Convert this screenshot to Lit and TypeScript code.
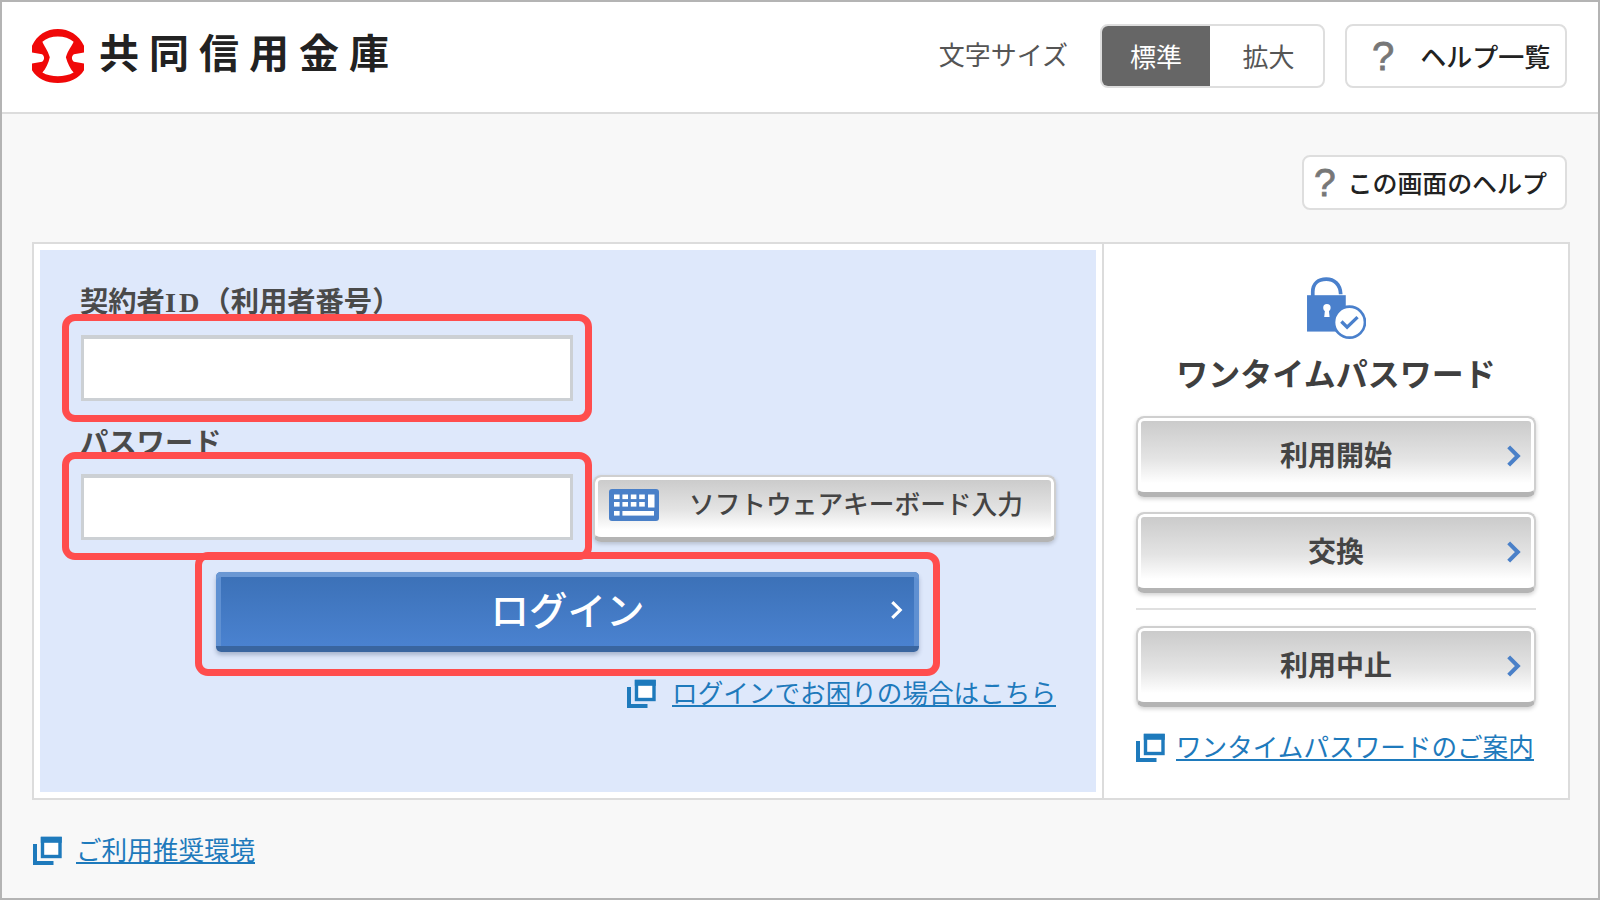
import { LitElement, html, css, svg } from "lit";
import { customElement } from "lit/decorators.js";

const linkIcon = html`<svg class="li" viewBox="0 0 29 29" width="29" height="29">
  <path d="M2 8v19h18.5" fill="none" stroke="#1e7abc" stroke-width="4"/>
  <rect x="9.5" y="2.5" width="17.5" height="18" fill="#fff" stroke="#1e7abc" stroke-width="3.4"/>
  <rect x="7.8" y="0.8" width="21" height="6" fill="#1e7abc"/>
</svg>`;

const chev = (c: string, w: number, h: number, sw: number) => html`<svg class="chev" viewBox="0 0 14 22" width=${w} height=${h}>
  <path d="M2.5 2.5 L11 11 L2.5 19.5" fill="none" stroke=${c} stroke-width=${sw}/>
</svg>`;

const keyCells = () => {
  const out = [];
  for (let r = 0; r < 2; r++) {
    for (let c = 0; c < 4; c++) {
      out.push(svg`<rect x=${5 + c * 8.4} y=${5.5 + r * 7.5} width="5.6" height="4.6" fill="#fff"/>`);
    }
  }
  return out;
};

@customElement("app-root")
export class AppRoot extends LitElement {
  static styles = css`
    :host { display: block; }
    * { box-sizing: border-box; }
    .page {
      width: 1600px; height: 900px; border: 2px solid #b4b4b4; background: #f8f8f8;
      display: flex; flex-direction: column; overflow: hidden;
      font-family: "Noto Sans CJK JP", "Noto Sans", sans-serif; color: #444;
    }
    header {
      height: 112px; flex: none; background: #fff; border-bottom: 2px solid #dcdcdc;
      display: flex; align-items: flex-start; padding: 22px 31px 0 30px;
    }
    .logo { display: flex; align-items: center; gap: 14px; height: 63px; }
    .logo svg { display: block; }
    .logo-text {
      font-size: 40px; font-weight: 700; letter-spacing: 10px; line-height: 50px; color: #222;
      white-space: nowrap; margin: -10px 0 0 1px;
    }
    .spacer { flex: 1; }
    .size-label { font-size: 26px; line-height: 60px; color: #555; margin-right: 32px; }
    .seg {
      display: flex; width: 225px; height: 64px; border: 2px solid #dedede; border-radius: 8px;
      overflow: hidden; background: #fff; margin-right: 20px;
    }
    .seg div { display: flex; align-items: center; justify-content: center; font-size: 26px; line-height: 1; color: #555; }
    .seg .on { width: 108px; background: #666; color: #fff; }
    .seg .off { flex: 1; padding-left: 4px; }
    .help-list {
      width: 222px; height: 64px; border: 2px solid #dedede; border-radius: 8px; background: #fff;
      display: flex; align-items: center; padding-left: 25px; color: #222;
      font-size: 26px; font-weight: 500; line-height: 1;
    }
    .q { font-family: "Liberation Sans", sans-serif; color: #777; font-weight: 400; -webkit-text-stroke: 0.8px #777; }
    .help-list .q { font-size: 40px; margin-right: 26px; }
    main { flex: 1; padding: 41px 28px 0 30px; display: flex; flex-direction: column; }
    .help-row { display: flex; justify-content: flex-end; margin-right: 3px; }
    .help-btn {
      width: 265px; height: 55px; border: 2px solid #dedede; border-radius: 8px; background: #fff;
      display: flex; align-items: center; padding-left: 10px; color: #222;
      font-size: 25px; font-weight: 500; line-height: 1; white-space: nowrap; letter-spacing: -0.1px;
    }
    .help-btn .q { font-size: 39px; margin-right: 12px; }
    .card {
      margin-top: 32px; height: 558px; border: 2px solid #dcdcdc; background: #fff;
      display: flex;
    }
    .blue {
      width: 1056px; flex: none; background: #dee8fb; padding: 30px 40px 0 40px; margin: 6px 0 6px 6px;
    }
    label { display: block; font-size: 28.3px; line-height: 40px; font-weight: 700; color: #4a4a4a; white-space: nowrap; }
    label .latin { font-family: "Liberation Serif", serif; letter-spacing: 3px; }
    .hl { position: relative; }
    .hl::after {
      content: ""; position: absolute; border: 7px solid #ff4d4d; border-radius: 13px; pointer-events: none;
    }
    .field.hl { width: 492px; flex: none; margin-left: 1px; }
    .field.first::after { inset: -21px -19px -21px -19px; }
    .field.second::after { inset: -22px -19px -20px -19px; }
    .input {
      display: block; width: 100%; height: 66px; background: #fff; border: 3px solid #ccd0d4;
      border-top-width: 4px; border-radius: 0; padding: 0; outline: none;
    }
    .first { margin-top: 12px; }
    .pw-label { margin-top: 20px; }
    .pw-row { display: flex; gap: 20px; margin-top: 13px; align-items: flex-start; }
    .grey-btn {
      border: 2px solid #cfcfcf; border-bottom: 5px solid #b4b4b4; border-radius: 8px;
      background: linear-gradient(#c9c9c9, #e4e4e4 55%, #ffffff 88%);
      box-shadow: inset 0 0 0 3px #fff, 0 2px 4px rgba(0, 0, 0, 0.18);
      font-weight: 700; color: #444;
    }
    .key-btn {
      width: 463px; height: 67px; margin-top: 1px; display: flex; align-items: center; padding: 0 0 8px 14px;
      font-size: 25.7px; font-weight: 500; line-height: 1; white-space: nowrap;
    }
    .key-btn svg { margin: 4px 30px 0 0; flex: none; }
    .login-wrap { width: 703px; margin: 30px 0 0 136px; }
    .login-wrap.hl::after { inset: -20px -21px -24px -21px; }
    .login {
      height: 80px; border-radius: 5px;
      border-bottom: 6px solid #39659f;
      background: linear-gradient(#3b70b6, #4a82d0);
      box-shadow: inset 0 5px 0 #6a97d3, inset 5px 0 0 #5f90d2, inset -5px 0 0 #5f90d2, 0 3px 4px rgba(40, 60, 100, 0.3);
      color: #fff; font-size: 38.5px; font-weight: 500; line-height: 1;
      display: grid; grid-template-columns: 1fr auto 1fr; align-items: center; padding-bottom: 2px;
    }
    .login span { grid-column: 2; }
    .chev { display: block; }
    .login .chev { grid-column: 3; justify-self: end; margin-right: 16px; margin-top: 4px; }
    a {
      color: #1e7abc; font-size: 25.6px; line-height: 29px; text-decoration: none; white-space: nowrap;
      border-bottom: 2px solid #1e7abc; display: block; height: 30px;
    }
    .link { display: flex; align-items: flex-start; gap: 16px; }
    .li { display: block; flex: none; margin-top: 2px; }
    .link-login { justify-content: flex-end; margin-top: 25px; }
    .side {
      flex: 1; margin-left: 6px; border-left: 2px solid #dcdcdc; padding: 32px 32px 0;
      display: flex; flex-direction: column; align-items: stretch;
    }
    .lock { display: block; margin: 0 auto; }
    h2 {
      margin: 9px 0 21px; font-size: 32px; font-weight: 700; line-height: 46px; text-align: center; color: #3f3f3f;
      white-space: nowrap;
    }
    .side-btn {
      height: 81px; display: grid; grid-template-columns: 1fr auto 1fr; align-items: center;
      font-size: 28px; line-height: 1; padding-bottom: 3px;
    }
    .side-btn span { grid-column: 2; }
    .side-btn .chev { grid-column: 3; justify-self: end; margin-right: 13px; margin-top: 4px; }
    .side-btn + .side-btn { margin-top: 15px; }
    hr { border: 0; border-top: 2px solid #e0e0e0; margin: 15px 0 16px; width: 100%; }
    .side-btn.after-hr { margin-top: 0; }
    .link-side { margin-top: 24px; gap: 11px; }
    .link-foot { margin: 34px 0 0 1px; gap: 14px; }
  `;

  render() {
    return html`
      <div class="page">
        <header>
          <div class="logo">
            <svg viewBox="25 22 155 161" width="52" height="54">
              <path fill="#f00808" fill-rule="evenodd" d="M102 22C135 22 165 40 180 72L180 92L150 97C146 100 144 104 144 108C144 113 146 117 150 120L180 125L180 145C165 170 135 183 102 183C68 183 40 170 25 145L25 125L55 120C59 117 61 113 61 108C61 104 59 100 55 97L25 92L25 72C40 40 68 22 102 22ZM102 44C84 44 68 49 56 60C60 72 72 85 78 106C74 125 66 140 56 152C68 160 86 163 102 163C118 163 136 160 149 152C139 140 131 125 126 106C132 85 145 72 149 60C137 49 120 44 102 44Z"/>
            </svg>
            <div class="logo-text">共同信用金庫</div>
          </div>
          <div class="spacer"></div>
          <div class="size-label">文字サイズ</div>
          <div class="seg"><div class="on">標準</div><div class="off">拡大</div></div>
          <div class="help-list"><span class="q">?</span>ヘルプ一覧</div>
        </header>
        <main>
          <div class="help-row"><div class="help-btn"><span class="q">?</span>この画面のヘルプ</div></div>
          <div class="card">
            <div class="blue">
              <label>契約者<span class="latin">ID</span>（利用者番号）</label>
              <div class="field hl first"><input class="input" type="text" aria-label="契約者ID" /></div>
              <label class="pw-label">パスワード</label>
              <div class="pw-row">
                <div class="field hl second"><input class="input" type="password" aria-label="パスワード" /></div>
                <div class="grey-btn key-btn">
                  <svg viewBox="0 0 50 32" width="50" height="32">
                    <rect width="50" height="32" rx="3" fill="#4a80c8"/>
                    ${keyCells()}
                    <rect x="39" y="5.5" width="6.5" height="13" fill="#fff"/>
                    <rect x="5" y="22" width="5.6" height="4.6" fill="#fff"/>
                    <rect x="13.4" y="22" width="31.6" height="4.6" fill="#fff"/>
                  </svg>
                  ソフトウェアキーボード入力
                </div>
              </div>
              <div class="login-wrap hl">
                <div class="login"><span>ログイン</span>${chev("#fff", 13, 22, 3.4)}</div>
              </div>
              <div class="link link-login">${linkIcon}<a>ログインでお困りの場合はこちら</a></div>
            </div>
            <div class="side">
              <svg class="lock" viewBox="36 18 176 190" width="60" height="64">
                <path d="M55 78V65C55 40 72 27 95 27C118 27 137 42 138 72" fill="none" stroke="#4a80cc" stroke-width="11"/>
                <rect x="38" y="75" width="115" height="108" fill="#4a80cc"/>
                <circle cx="97" cy="112" r="11" fill="#fff"/>
                <path d="M92 112h10l3 28h-16z" fill="#fff"/>
                <circle cx="164" cy="155" r="46" fill="#fff" stroke="#4a80cc" stroke-width="8"/>
                <path d="M140 153L157 170L188 140" fill="none" stroke="#4a80cc" stroke-width="10"/>
              </svg>
              <h2>ワンタイムパスワード</h2>
              <div class="grey-btn side-btn"><span>利用開始</span>${chev("#4a80c8", 15, 24, 3.8)}</div>
              <div class="grey-btn side-btn"><span>交換</span>${chev("#4a80c8", 15, 24, 3.8)}</div>
              <hr />
              <div class="grey-btn side-btn after-hr"><span>利用中止</span>${chev("#4a80c8", 15, 24, 3.8)}</div>
              <div class="link link-side">${linkIcon}<a>ワンタイムパスワードのご案内</a></div>
            </div>
          </div>
          <div class="link link-foot">${linkIcon}<a>ご利用推奨環境</a></div>
        </main>
      </div>
    `;
  }
}
